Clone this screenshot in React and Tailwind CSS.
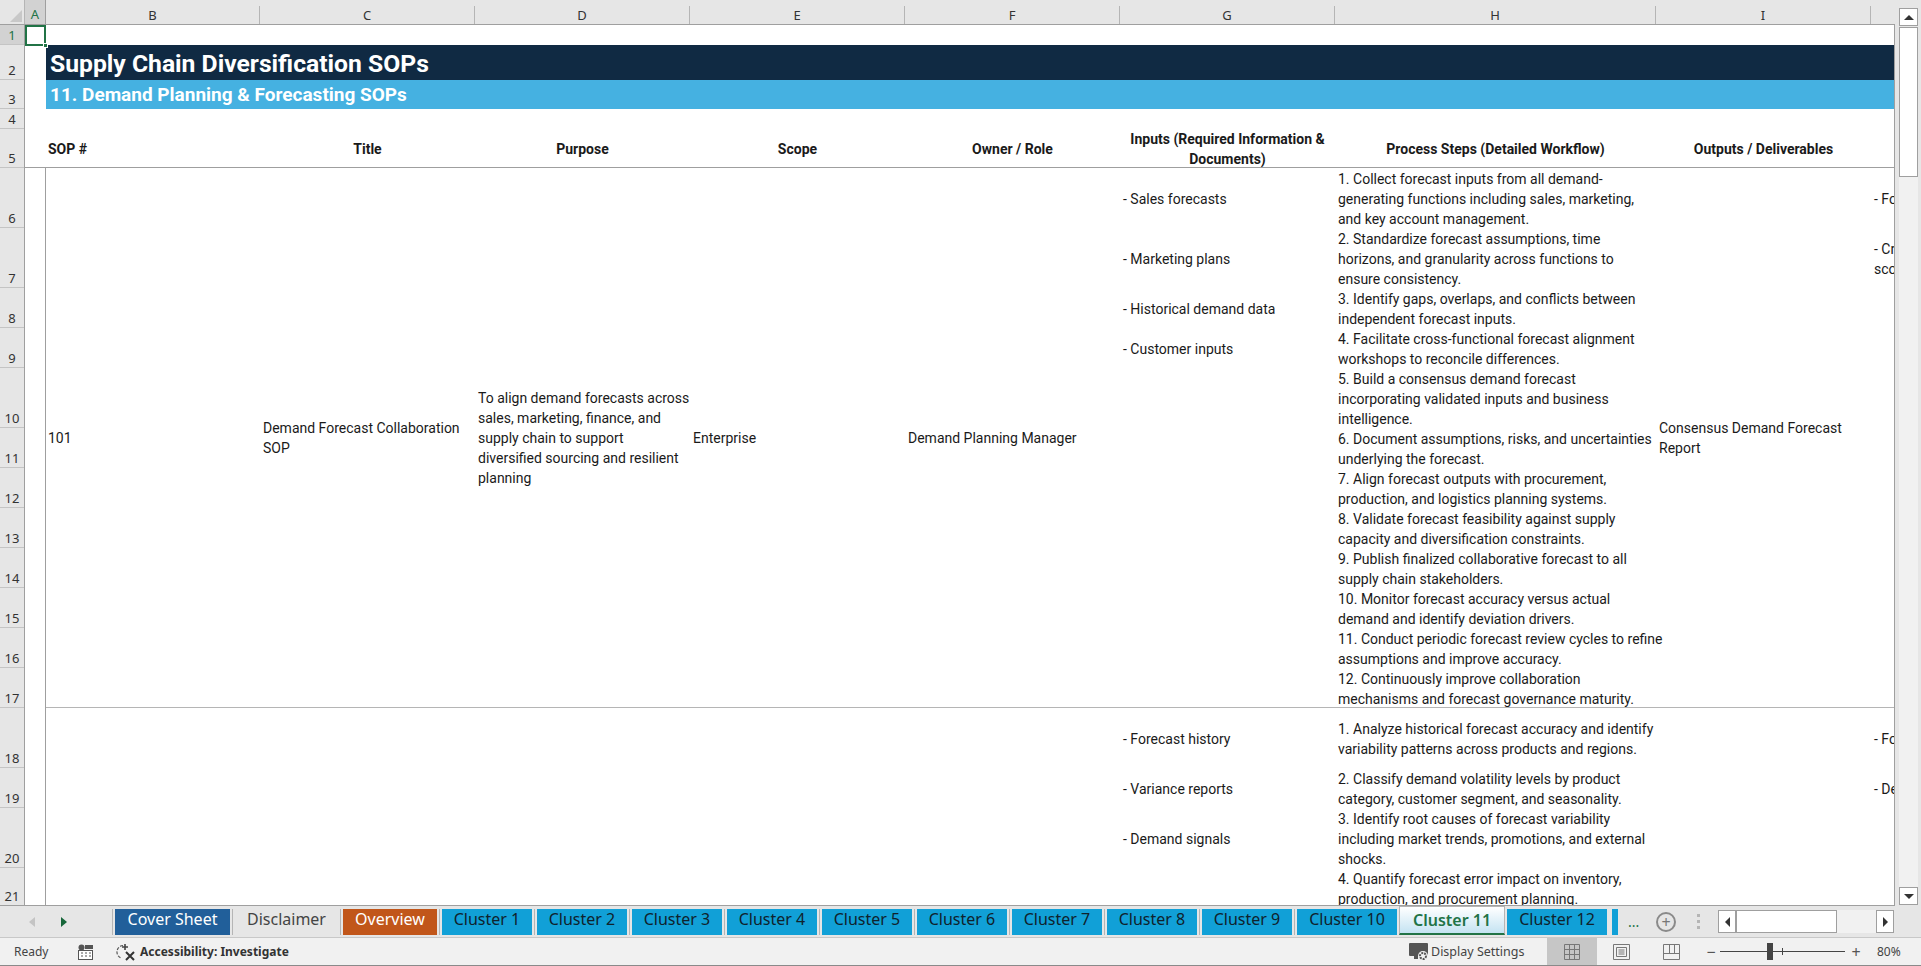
const rowHeights = [
  ["1", "h-[20px]"], ["2", "h-[35px]"], ["3", "h-[29px]"], ["4", "h-[20px]"], ["5", "h-[39px]"],
  ["6", "h-[60px]"], ["7", "h-[60px]"], ["8", "h-[40px]"], ["9", "h-[40px]"], ["10", "h-[60px]"],
  ["11", "h-[40px]"], ["12", "h-[40px]"], ["13", "h-[40px]"], ["14", "h-[40px]"], ["15", "h-[40px]"],
  ["16", "h-[40px]"], ["17", "h-[40px]"], ["18", "h-[60px]"], ["19", "h-[40px]"], ["20", "h-[60px]"],
  ["21", "h-[38px]"],
];

const columns = [
  ["B", "w-[214px]"], ["C", "w-[215px]"], ["D", "w-[215px]"], ["E", "w-[215px]"],
  ["F", "w-[215px]"], ["G", "w-[215px]"], ["H", "w-[321px]"], ["I", "w-[215px]"],
];

const stepsOne = [
  ["h-[60px]", ["1. Collect forecast inputs from all demand-", "generating functions including sales, marketing,", "and key account management."]],
  ["h-[60px]", ["2. Standardize forecast assumptions, time", "horizons, and granularity across functions to", "ensure consistency."]],
  ["h-[40px]", ["3. Identify gaps, overlaps, and conflicts between", "independent forecast inputs."]],
  ["h-[40px]", ["4. Facilitate cross-functional forecast alignment", "workshops to reconcile differences."]],
  ["h-[60px]", ["5. Build a consensus demand forecast", "incorporating validated inputs and business", "intelligence."]],
  ["h-[40px]", ["6. Document assumptions, risks, and uncertainties", "underlying the forecast."]],
  ["h-[40px]", ["7. Align forecast outputs with procurement,", "production, and logistics planning systems."]],
  ["h-[40px]", ["8. Validate forecast feasibility against supply", "capacity and diversification constraints."]],
  ["h-[40px]", ["9. Publish finalized collaborative forecast to all", "supply chain stakeholders."]],
  ["h-[40px]", ["10. Monitor forecast accuracy versus actual", "demand and identify deviation drivers."]],
  ["h-[40px]", ["11. Conduct periodic forecast review cycles to refine", "assumptions and improve accuracy."]],
  ["h-[40px]", ["12. Continuously improve collaboration", "mechanisms and forecast governance maturity."]],
];

const stepsTwo = [
  ["h-[60px]", ["1. Analyze historical forecast accuracy and identify", "variability patterns across products and regions."]],
  ["h-[40px]", ["2. Classify demand volatility levels by product", "category, customer segment, and seasonality."]],
  ["h-[60px]", ["3. Identify root causes of forecast variability", "including market trends, promotions, and external", "shocks."]],
  ["h-[40px]", ["4. Quantify forecast error impact on inventory,", "production, and procurement planning."]],
];

const inputsOne = [
  ["h-[60px]", ["- Sales forecasts"]],
  ["h-[60px]", ["- Marketing plans"]],
  ["h-[40px]", ["- Historical demand data"]],
  ["h-[40px]", ["- Customer inputs"]],
];

const inputsTwo = [
  ["h-[60px]", ["- Forecast history"]],
  ["h-[40px]", ["- Variance reports"]],
  ["h-[60px]", ["- Demand signals"]],
];

const outputsOne = [
  ["h-[60px]", ["- Forecast inputs"]],
  ["h-[60px]", ["- Cross-functional", "scorecard"]],
];

const outputsTwo = [
  ["h-[60px]", ["- Forecast accuracy"]],
  ["h-[40px]", ["- Demand variability"]],
];

const tabs = [
  ["Cover Sheet", "w-[115px] bg-[#215f9a] text-white"],
  ["Disclaimer", "w-[103px] text-[#444444]"],
  ["Overview", "w-[94px] bg-[#c1561a] text-white"],
  ["Cluster 1", "w-[90px] bg-[#11a0d7] text-[#10222c]"],
  ["Cluster 2", "w-[90px] bg-[#11a0d7] text-[#10222c]"],
  ["Cluster 3", "w-[90px] bg-[#11a0d7] text-[#10222c]"],
  ["Cluster 4", "w-[90px] bg-[#11a0d7] text-[#10222c]"],
  ["Cluster 5", "w-[90px] bg-[#11a0d7] text-[#10222c]"],
  ["Cluster 6", "w-[90px] bg-[#11a0d7] text-[#10222c]"],
  ["Cluster 7", "w-[90px] bg-[#11a0d7] text-[#10222c]"],
  ["Cluster 8", "w-[90px] bg-[#11a0d7] text-[#10222c]"],
  ["Cluster 9", "w-[90px] bg-[#11a0d7] text-[#10222c]"],
  ["Cluster 10", "w-[100px] bg-[#11a0d7] text-[#10222c]"],
];

// a stack of spreadsheet rows, one entry per row height
function RowStack({ rows, className }) {
  return (
    <div className={`flex flex-col ${className}`}>
      {rows.map(([height, lines], i) => (
        <div key={i} className={`${height} shrink-0 pt-[2px] flex flex-col justify-center`}>
          {lines.map((line) => (
            <div key={line} className="whitespace-nowrap">{line}</div>
          ))}
        </div>
      ))}
    </div>
  );
}

function MergedCell({ width, lines, pad = "px-[3px]" }) {
  return (
    <div className={`${width} shrink-0 flex flex-col justify-center ${pad}`}>
      {lines.map((line) => (
        <div key={line} className="whitespace-nowrap">{line}</div>
      ))}
    </div>
  );
}

function CalendarIcon() {
  return (
    <svg width="15" height="16" viewBox="0 0 15 16" className="shrink-0">
      <circle cx="3.5" cy="3.5" r="3" fill="#555" />
      <rect x="7" y="1" width="8" height="4" fill="#555" />
      <rect x="0.5" y="6.5" width="14" height="9" fill="#fff" stroke="#555" />
      <path d="M3 9h2M7 9h2M11 9h2M3 12h2M7 12h2M11 12h2" stroke="#555" />
    </svg>
  );
}

function AccessibilityIcon() {
  return (
    <svg width="20" height="18" viewBox="0 0 20 18" className="shrink-0">
      <path d="M7 2.5A6.5 6.5 0 0 0 5 15" fill="none" stroke="#555" strokeWidth="1.2" strokeDasharray="3 1.5" />
      <path d="M9 1v6M6 4h6" stroke="#444" strokeWidth="1.6" />
      <path d="M10 9l8 8M18 9l-8 8" stroke="#333" strokeWidth="2" />
    </svg>
  );
}

function DisplayIcon() {
  return (
    <svg width="20" height="20" viewBox="0 0 20 20" className="shrink-0">
      <rect x="0" y="1" width="19" height="13" rx="1" fill="#555" />
      <rect x="5" y="14" width="4" height="3" fill="#555" />
      <circle cx="14" cy="14" r="5" fill="#f1f1f1" />
      <circle cx="14" cy="14" r="3" fill="none" stroke="#555" strokeWidth="2" strokeDasharray="2 1" />
    </svg>
  );
}

export default function App() {
  return (
    <div className="w-[1921px] h-[966px] overflow-hidden flex flex-col bg-white font-['Roboto',sans-serif] text-[14px] leading-[20px] text-[#1a1a1a]">
      <div className="h-[906px] shrink-0 flex bg-[#e6e6e6]">
        <div className="w-[1895px] shrink-0 flex flex-col border-b border-[#9f9f9f]">
          {/* COLUMN HEADERS */}
          <div className="h-[25px] shrink-0 flex bg-[#e6e6e6] border-b border-[#9f9f9f] font-['Noto_Sans',sans-serif] text-[13px] text-[#333]">
            <div className="w-[25px] shrink-0 pt-[6px] flex justify-end items-end border-r border-[#b5b5b5]">
              <div className="w-0 h-0 mr-[2px] mb-[2px] border-l-[12px] border-b-[12px] border-l-transparent border-b-[#c8c8c8]" />
            </div>
            <div className="w-[21px] shrink-0 flex items-end justify-center bg-[#d2d2d2] text-[#217346] border-r border-[#9f9f9f]">A</div>
            {columns.map(([name, width]) => (
              <div key={name} className={`${width} shrink-0 mt-[6px] flex items-center justify-center border-r border-[#b5b5b5]`}>
                {name}
              </div>
            ))}
          </div>

          <div className="flex-1 min-h-0 flex overflow-hidden">
            {/* ROW HEADERS */}
            <div className="w-[25px] shrink-0 flex flex-col bg-[#e6e6e6] border-r border-[#9f9f9f] font-['Noto_Sans',sans-serif] text-[13px] text-[#333]">
              {rowHeights.map(([name, height], i) => (
                <div
                  key={name}
                  className={`${height} shrink-0 flex items-end justify-center leading-[17px] border-b border-[#c4c4c4] ${i === 0 ? "bg-[#d2d2d2] text-[#217346]" : ""}`}
                >
                  {name}
                </div>
              ))}
            </div>

            {/* SHEET */}
            <div className="relative flex-1 min-w-0 overflow-hidden flex flex-col bg-white border-r border-[#9f9f9f]">
              <div className="absolute left-0 top-0 w-[21px] h-[21px] border-2 border-[#217346] pointer-events-none" />
              <div className="absolute left-[18px] top-[18px] w-[5px] h-[5px] bg-[#217346] border border-white pointer-events-none" />

              <div className="h-[20px] shrink-0" />

              <div className="ml-[21px] h-[35px] shrink-0 pt-[1px] bg-[#102a43] text-white font-bold text-[24.7px] leading-[35px] pl-[4px] whitespace-nowrap">
                Supply Chain Diversification SOPs
              </div>
              <div className="ml-[21px] h-[29px] shrink-0 bg-[#45b1e1] text-white font-bold text-[19px] leading-[29px] pl-[4px] whitespace-nowrap">
                11. Demand Planning &amp; Forecasting SOPs
              </div>
              <div className="ml-[21px] h-[20px] shrink-0" />

              <div className="flex h-[39px] shrink-0 font-bold border-b border-[#9f9f9f]">
                <div className="w-[21px] shrink-0" />
                <div className="w-[214px] shrink-0 pt-[2px] flex items-center px-[2px]">SOP #</div>
                {["Title", "Purpose", "Scope", "Owner / Role"].map((h) => (
                  <div key={h} className="w-[215px] shrink-0 pt-[2px] flex items-center justify-center">{h}</div>
                ))}
                <div className="w-[215px] shrink-0 text-center">
                  Inputs (Required Information &amp;
                  <br />
                  Documents)
                </div>
                <div className="w-[321px] shrink-0 pt-[2px] flex items-center justify-center">Process Steps (Detailed Workflow)</div>
                <div className="w-[215px] shrink-0 pt-[2px] flex items-center justify-center">Outputs / Deliverables</div>
              </div>

              {/* SOP 101 */}
              <div className="flex h-[540px] shrink-0">
                <div className="w-[21px] shrink-0 border-r border-[#9f9f9f]" />
                <div className="flex-1 min-w-0 flex border-b border-[#b5b5b5] overflow-hidden">
                  <MergedCell width="w-[214px]" lines={["101"]} pad="px-[2px]" />
                  <MergedCell width="w-[215px]" lines={["Demand Forecast Collaboration", "SOP"]} />
                  <MergedCell
                    width="w-[215px]"
                    lines={["To align demand forecasts across", "sales, marketing, finance, and", "supply chain to support", "diversified sourcing and resilient", "planning"]}
                  />
                  <MergedCell width="w-[215px]" lines={["Enterprise"]} />
                  <MergedCell width="w-[215px]" lines={["Demand Planning Manager"]} />
                  <RowStack rows={inputsOne} className="w-[215px] shrink-0 px-[3px]" />
                  <RowStack rows={stepsOne} className="w-[321px] shrink-0 px-[3px]" />
                  <MergedCell width="w-[215px]" lines={["Consensus Demand Forecast", "Report"]} />
                  <RowStack rows={outputsOne} className="w-[24px] shrink-0 px-[3px] overflow-hidden" />
                </div>
              </div>

              {/* NEXT SOP */}
              <div className="flex flex-1 min-h-0">
                <div className="w-[21px] shrink-0 border-r border-[#9f9f9f]" />
                <div className="flex-1 min-w-0 flex overflow-hidden">
                  <div className="w-[1074px] shrink-0" />
                  <RowStack rows={inputsTwo} className="w-[215px] shrink-0 px-[3px]" />
                  <RowStack rows={stepsTwo} className="w-[321px] shrink-0 px-[3px]" />
                  <div className="w-[215px] shrink-0" />
                  <RowStack rows={outputsTwo} className="w-[24px] shrink-0 px-[3px] overflow-hidden" />
                </div>
              </div>
            </div>
          </div>
        </div>

        {/* VERTICAL SCROLLBAR */}
        <div className="flex-1 flex flex-col items-center pt-[8px] pb-[1px] pl-[1px]">
          <button className="w-[19px] h-[18px] shrink-0 flex items-center justify-center bg-white border border-[#9f9f9f]">
            <span className="w-0 h-0 border-x-[5px] border-b-[5px] border-x-transparent border-b-[#333]" />
          </button>
          <div className="w-[19px] h-[150px] shrink-0 mt-[1px] bg-white border border-[#9f9f9f]" />
          <div className="flex-1 w-[19px] bg-[#f1f1f1]" />
          <button className="w-[19px] h-[18px] shrink-0 flex items-center justify-center bg-white border border-[#9f9f9f]">
            <span className="w-0 h-0 border-x-[5px] border-t-[5px] border-x-transparent border-t-[#333]" />
          </button>
        </div>
      </div>

      {/* SHEET TABS */}
      <div className="h-[32px] shrink-0 flex items-center bg-[#e6e6e6] border-b border-b-[#c8c8c8] font-['Noto_Sans',sans-serif] text-[16px] whitespace-nowrap">
        <div className="w-[113px] shrink-0 h-[26px] pl-[29px] flex items-center gap-[26px] border-r border-[#b5b5b5]">
          <span className="w-0 h-0 border-y-[5px] border-r-[6px] border-y-transparent border-r-[#c4c4c4]" />
          <span className="w-0 h-0 border-y-[5px] border-l-[6px] border-y-transparent border-l-[#17663a]" />
        </div>
        <div className="flex items-center h-[26px] ml-[2px]">
          {tabs.map(([name, style]) => (
            <div key={name} className="flex items-center">
              <div className={`${style} h-[26px] pb-[5px] flex items-center justify-center`}>{name}</div>
              <div className="w-[1px] h-[26px] mx-[2px] bg-[#b5b5b5]" />
            </div>
          ))}
        </div>
        <div className="w-[106px] h-[29px] -mt-[2px] -ml-[3px] shrink-0 flex items-center justify-center bg-gradient-to-b from-white to-[#c4e3f2] border-x border-t border-[#b5b5b5] border-b-2 border-b-[#217346] font-semibold text-[#217346]">
          Cluster 11
        </div>
        <div className="w-[100px] h-[26px] ml-[2px] pb-[5px] shrink-0 flex items-center justify-center bg-[#11a0d7] text-[#10222c]">Cluster 12</div>
        <div className="w-[6px] h-[26px] ml-[5px] shrink-0 bg-[#11a0d7]" />
        <span className="ml-[10px] w-[20px] text-[#217346] text-[14px]">...</span>
        <div className="ml-[8px] w-[20px] h-[20px] shrink-0 rounded-full border-2 border-[#8a8a8a] flex items-center justify-center text-[#777] text-[16px] leading-none">+</div>
        <div className="ml-[21px] flex flex-col gap-[3px]">
          <span className="w-[3px] h-[3px] bg-[#b5b5b5]" />
          <span className="w-[3px] h-[3px] bg-[#b5b5b5]" />
          <span className="w-[3px] h-[3px] bg-[#b5b5b5]" />
        </div>
        <div className="ml-[18px] w-[176px] h-[23px] shrink-0 flex bg-[#f1f1f1]">
          <button className="w-[18px] flex items-center justify-center bg-white border border-[#9f9f9f]">
            <span className="w-0 h-0 border-y-[5px] border-r-[5px] border-y-transparent border-r-[#333]" />
          </button>
          <div className="w-[101px] bg-white border border-[#9f9f9f]" />
          <div className="flex-1" />
          <button className="w-[18px] flex items-center justify-center bg-white border border-[#9f9f9f]">
            <span className="w-0 h-0 border-y-[5px] border-l-[5px] border-y-transparent border-l-[#333]" />
          </button>
        </div>
      </div>

      {/* STATUS BAR */}
      <div className="h-[28px] shrink-0 flex items-center bg-[#f1f1f1] border-b border-[#8a8a8a] font-['Noto_Sans',sans-serif] text-[12px] text-[#444] whitespace-nowrap">
        <span className="ml-[14px] w-[50px]">Ready</span>
        <span className="ml-[14px]"><CalendarIcon /></span>
        <span className="ml-[23px]"><AccessibilityIcon /></span>
        <span className="ml-[4px] font-bold text-[#333]">Accessibility: Investigate</span>
        <div className="flex-1" />
        <DisplayIcon />
        <span className="ml-[2px] w-[116px] text-[12.5px]">Display Settings</span>
        <div className="w-[50px] h-full flex items-center justify-center bg-[#c6c6c6]">
          <svg width="16" height="16" viewBox="0 0 16 16">
            <path d="M.5.5h15v15H.5zM5.5.5v15M10.5.5v15M.5 5.5h15M.5 10.5h15" fill="none" stroke="#777" />
          </svg>
        </div>
        <div className="w-[49px] flex justify-center">
          <svg width="17" height="16" viewBox="0 0 17 16">
            <path d="M.5.5h16v15H.5zM3.5 3.5h10v9h-10zM5.5 6h6M5.5 8h6M5.5 10h6" fill="none" stroke="#777" />
          </svg>
        </div>
        <div className="w-[51px] flex justify-center">
          <svg width="17" height="16" viewBox="0 0 17 16">
            <path d="M.5.5h16v15H.5zM.5 9.5h16M6.5.5v9M11.5.5v9" fill="none" stroke="#777" />
          </svg>
        </div>
        <span className="ml-[9px] w-[10px] text-center text-[16px] leading-none text-[#555]">−</span>
        <div className="relative ml-[4px] w-[125px] h-[1px] bg-[#444]">
          <div className="absolute left-[47px] top-[-8px] w-[6px] h-[17px] bg-[#444]" />
          <div className="absolute left-[62px] top-[-3px] w-[1px] h-[7px] bg-[#444]" />
        </div>
        <span className="ml-[6px] w-[10px] text-center text-[16px] leading-none text-[#555]">+</span>
        <span className="ml-[16px] w-[44px]">80%</span>
      </div>
    </div>
  );
}
